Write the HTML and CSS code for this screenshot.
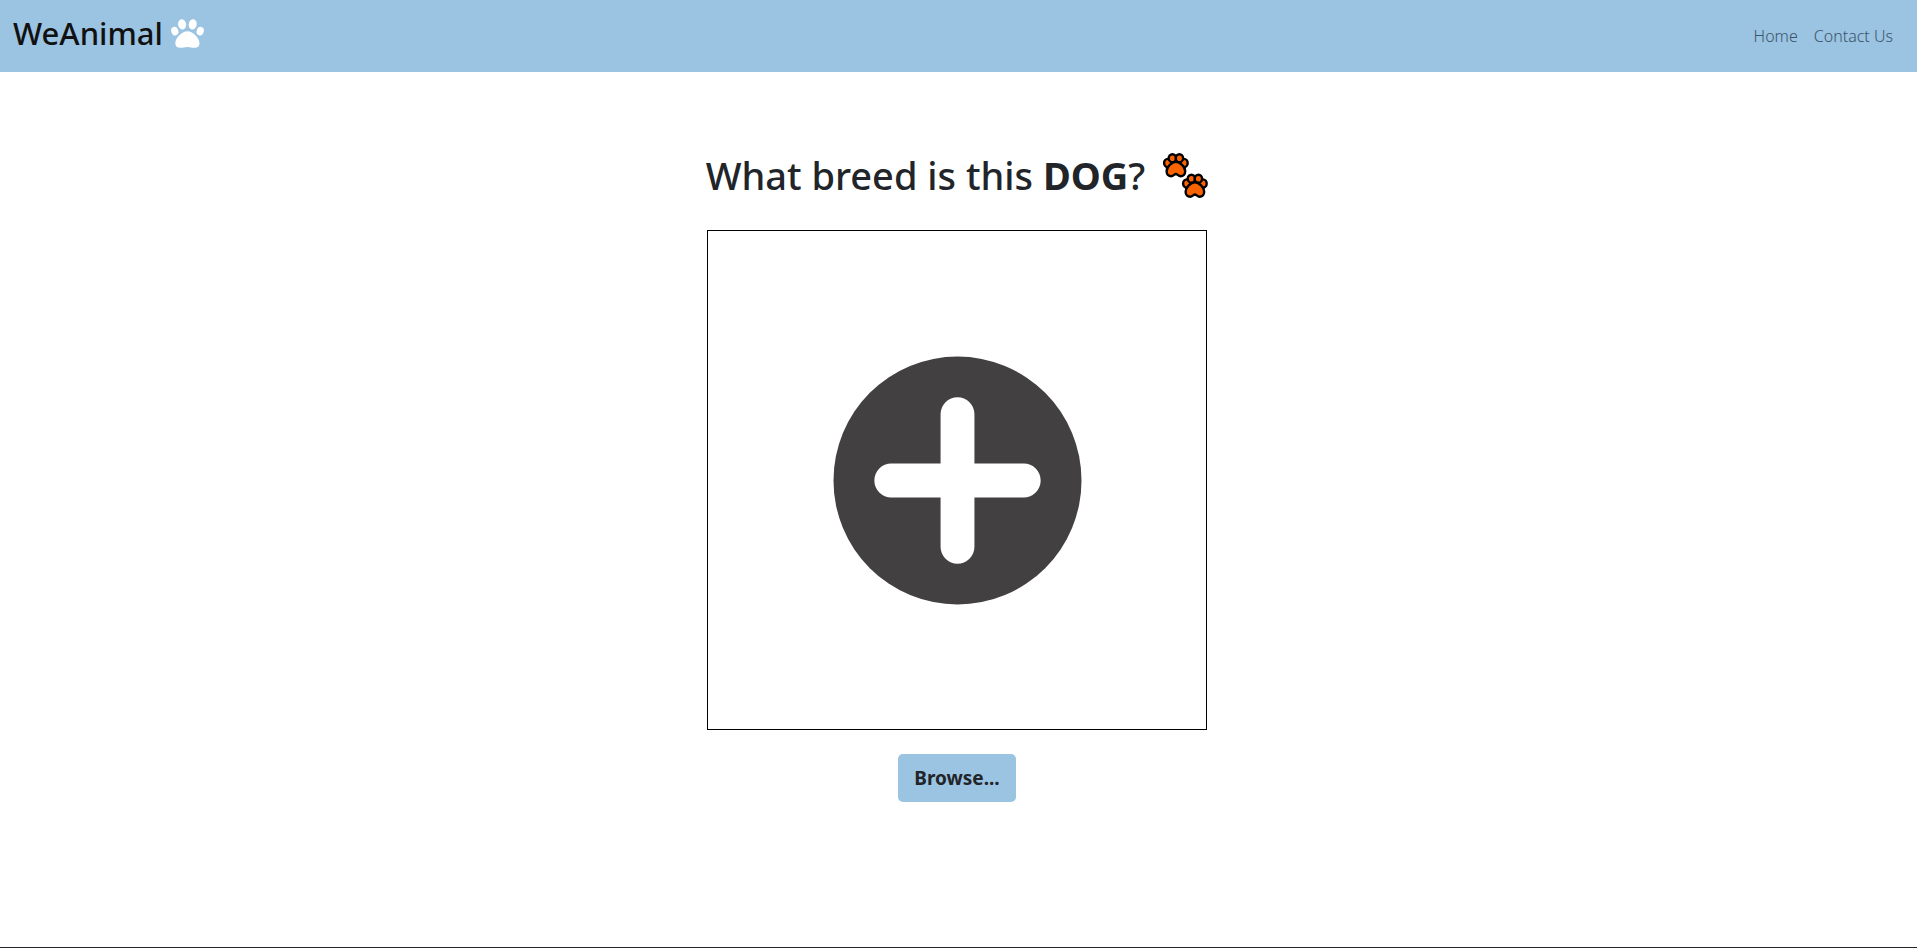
FILE: index.html
```html
<!DOCTYPE html>
<html lang="en">
<head>
<meta charset="utf-8">
<meta name="viewport" content="width=device-width, initial-scale=1">
<title>WeAnimal</title>
<link rel="stylesheet" href="styles.css">
</head>
<body>
<header class="navbar">
  <a class="brand" href="#">WeAnimal
    <svg class="brand-paw" viewBox="0 0 33 29" aria-hidden="true">
      <g fill="#fff">
        <ellipse cx="3.8" cy="12.2" rx="3.5" ry="4.4" transform="rotate(-20 3.8 12.2)"/>
        <ellipse cx="11.1" cy="5.4" rx="4" ry="5.2" transform="rotate(-10 11.1 5.4)"/>
        <ellipse cx="21.7" cy="5.4" rx="4" ry="5.2" transform="rotate(10 21.7 5.4)"/>
        <ellipse cx="29.2" cy="12.2" rx="3.5" ry="4.4" transform="rotate(20 29.2 12.2)"/>
        <path d="M16.4 12.2C10.5 12.2 4.3 19.3 4.3 24.2C4.3 27.3 6 28.7 9.2 28.7C12 28.7 13.8 27.9 16.4 27.9C19 27.9 20.8 28.7 23.6 28.7C26.8 28.7 28.5 27.3 28.5 24.2C28.5 19.3 22.3 12.2 16.4 12.2Z"/>
      </g>
    </svg>
  </a>
  <nav class="nav-links">
    <a href="#">Home</a>
    <a href="#">Contact Us</a>
  </nav>
</header>
<main class="page">
  <h1 class="title">
    <span>What breed is this <b>DOG</b>?</span>
    <svg class="title-paws" viewBox="0 0 45 45" aria-hidden="true">
      <defs>
        <g id="paw" fill="#f96302" stroke="#000" stroke-width="2.4" stroke-linejoin="round">
          <ellipse cx="4.9" cy="10" rx="3.8" ry="4.1"/>
          <ellipse cx="20.9" cy="10" rx="3.8" ry="4.1"/>
          <ellipse cx="9.4" cy="5.2" rx="3.7" ry="4"/>
          <ellipse cx="16.4" cy="5.2" rx="3.7" ry="4"/>
          <path d="M12.9 8.8C8.8 8.8 3.6 13.6 3.6 18.2C3.6 21.2 5.6 23.2 8.2 23.2C10.4 23.2 11.5 21 12.9 21C14.3 21 15.4 23.2 17.6 23.2C20.2 23.2 22.2 21.2 22.2 18.2C22.2 13.6 17 8.8 12.9 8.8Z"/>
        </g>
      </defs>
      <use href="#paw"/>
      <use href="#paw" x="19" y="20.500"/>
    </svg>
  </h1>
  <div class="preview">
    <svg class="plus" viewBox="0 0 250 250" role="img" aria-label="Add a photo">
      <circle cx="125" cy="125" r="124.5" fill="#424041"/>
      <path d="M125 58.5V191.5M58.5 125H191.5" stroke="#fff" stroke-width="34" stroke-linecap="round"/>
    </svg>
  </div>
  <button class="browse" type="button">Browse...</button>
</main>
<footer class="footer"></footer>
</body>
</html>
```
FILE: styles.css
```css
* {
  box-sizing: border-box;
}

body {
  margin: 0;
  min-height: 100vh;
  display: flex;
  flex-direction: column;
  background: #fff;
  color: #212529;
  font-family: "Noto Sans", "Open Sans", sans-serif;
}

.navbar {
  display: flex;
  align-items: center;
  justify-content: space-between;
  height: 72px;
  padding: 0 24px 0 13px;
  background: #9bc3e2;
}

.brand {
  display: flex;
  align-items: center;
  gap: 8px;
  padding-bottom: 6px;
  color: #111;
  font-size: 31px;
  font-weight: 500;
  line-height: 40px;
  text-decoration: none;
}

.brand-paw {
  width: 33px;
  height: 29px;
}

.nav-links {
  display: flex;
  gap: 16px;
  font-size: 16px;
  font-weight: 300;
}

.nav-links a {
  color: #3a566c;
  text-decoration: none;
}

.page {
  flex: 1;
  display: flex;
  flex-direction: column;
  align-items: center;
  padding: 71px 3px 0 0;
}

.title {
  display: flex;
  align-items: center;
  gap: 18px;
  margin: 0 0 23px;
  font-size: 38px;
  font-weight: 500;
  line-height: 64px;
}

.title b {
  font-weight: 700;
}

.title-paws {
  width: 45px;
  height: 45px;
}

.preview {
  display: grid;
  place-items: center;
  width: 500px;
  max-width: 100%;
  aspect-ratio: 1;
  border: 1px solid #000;
}

.plus {
  width: 50%;
}

.browse {
  margin-top: 24px;
  padding: 8px 16px;
  border: 0;
  border-radius: 5px;
  background: #9bc3e2;
  color: #212529;
  font: inherit;
  font-size: 19px;
  font-weight: 700;
  line-height: 32px;
}

.footer {
  height: 1px;
  background: #212529;
}
```
